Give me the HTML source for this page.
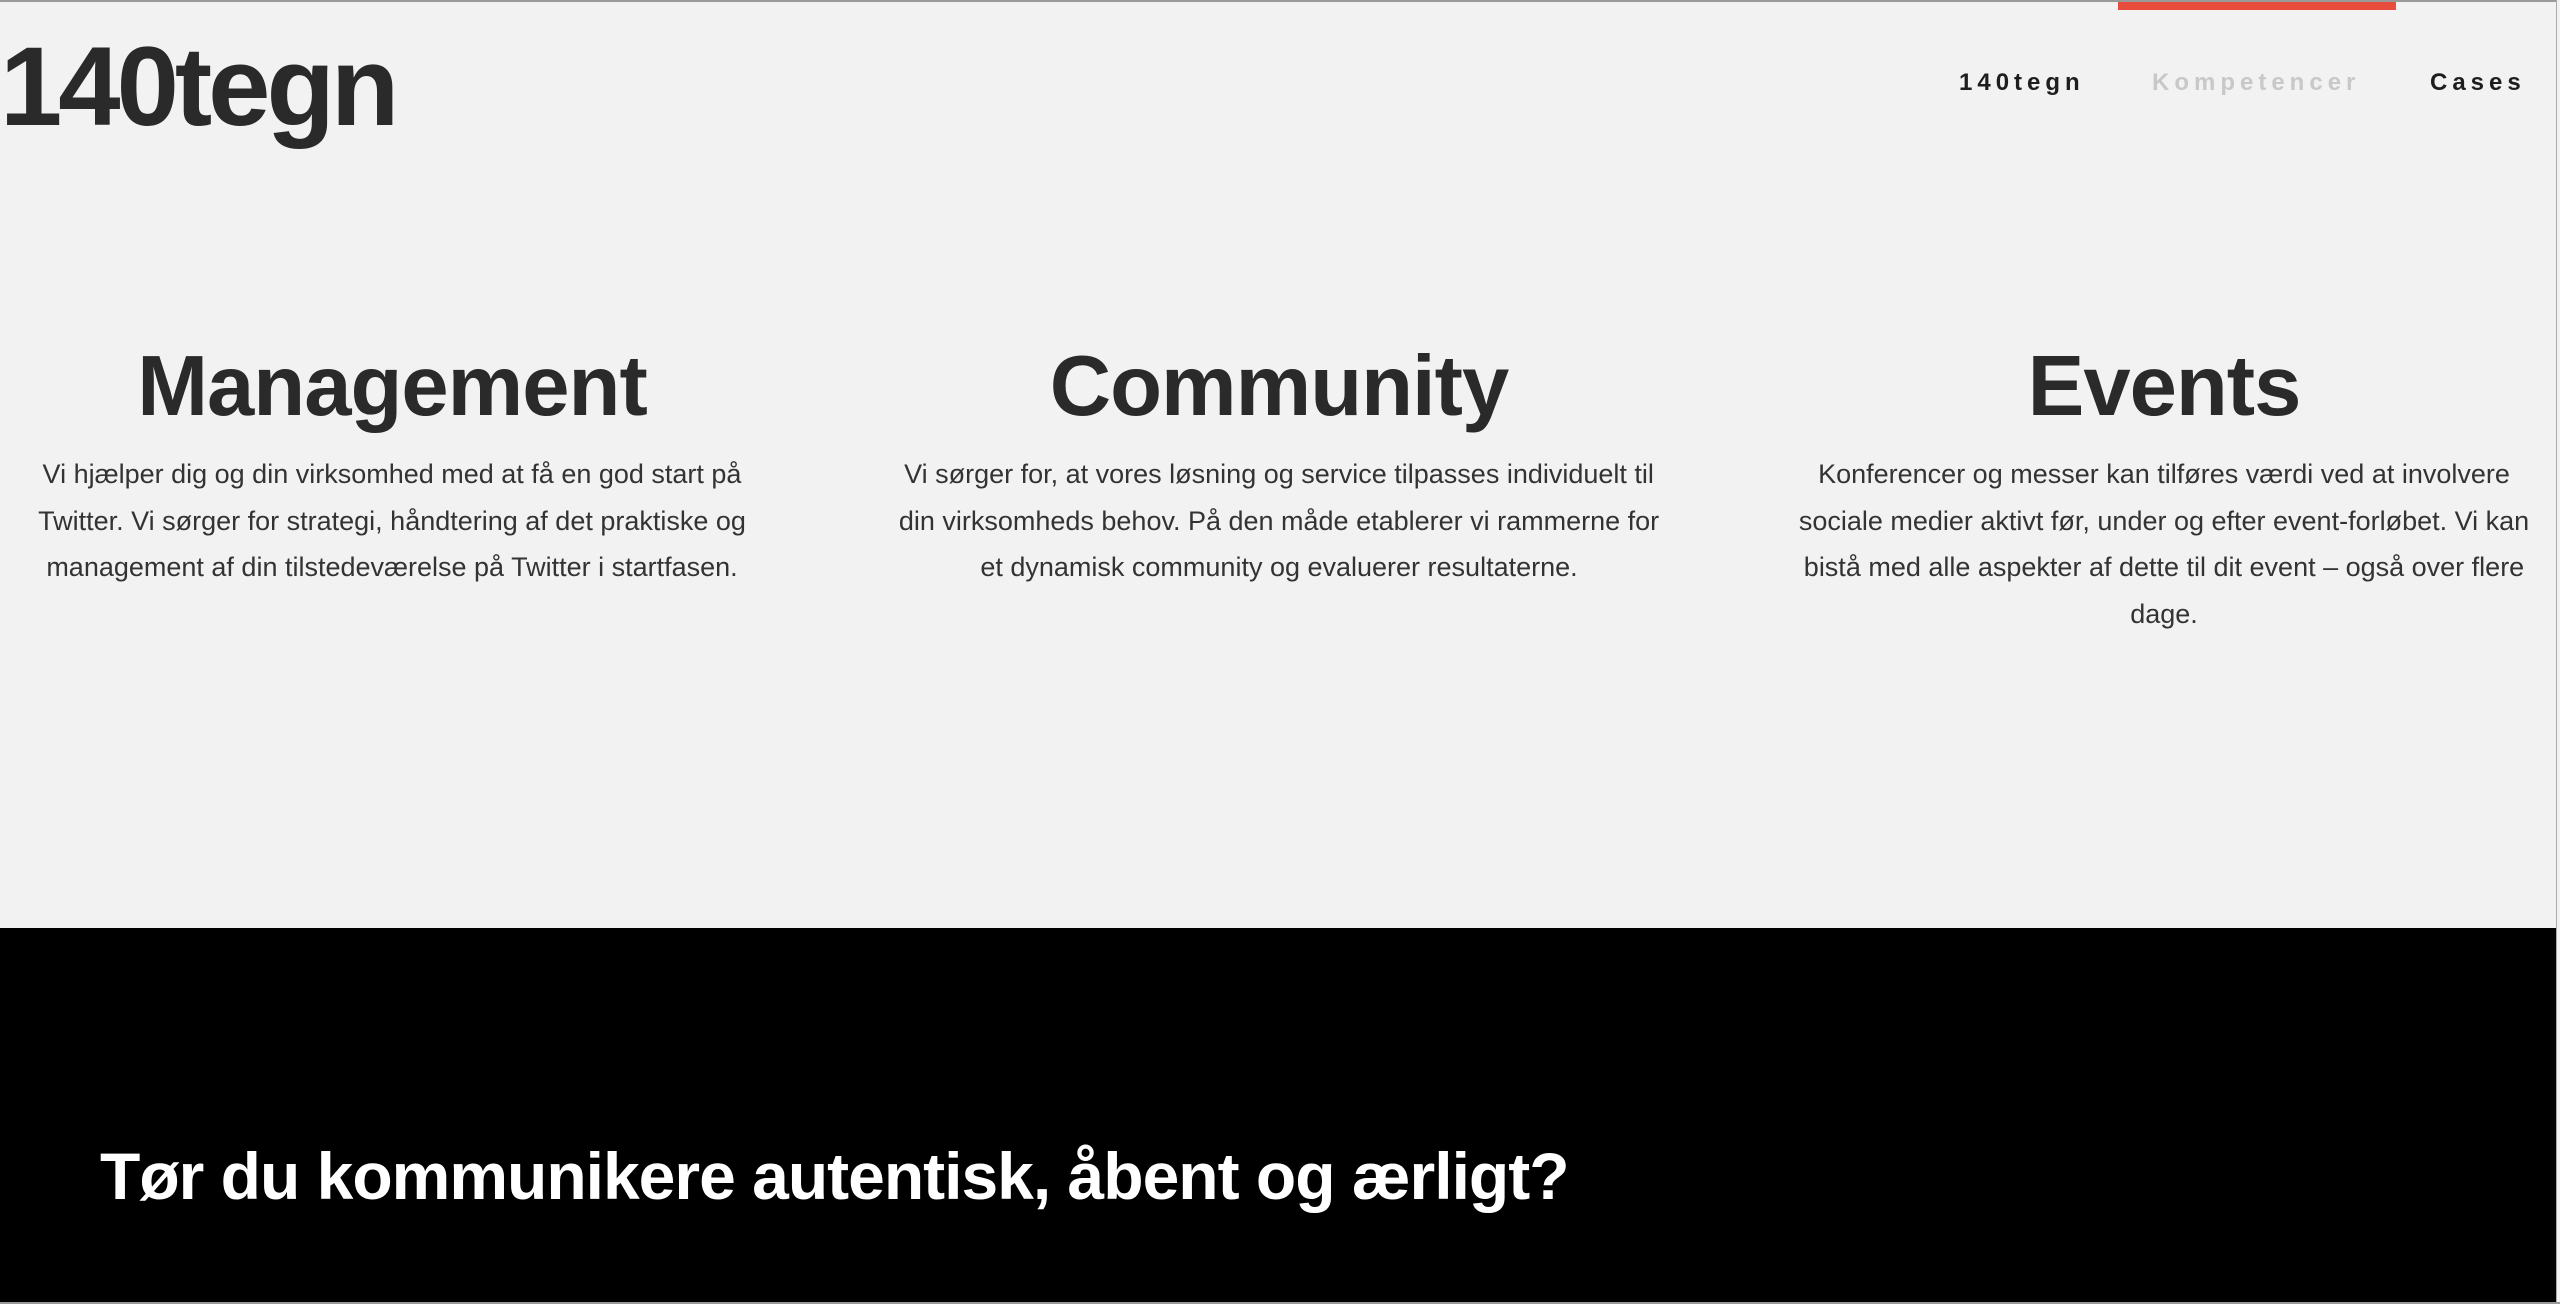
<!DOCTYPE html>
<html><head><meta charset="utf-8"><style>
*{margin:0;padding:0;box-sizing:border-box}
html,body{width:2560px;height:1304px;overflow:hidden;background:#f2f2f2;font-family:"Liberation Sans",sans-serif;color:#2a2a2a}
.top{position:absolute;left:0;top:0;width:2560px;height:2px;background:#9a9a9a}
.red{position:absolute;left:2118px;top:2px;width:278px;height:8px;background:#e74c3c}
.logo{position:absolute;left:0;top:22px;font-size:112px;font-weight:bold;letter-spacing:-4px;line-height:130px;color:#2a2a2a}
.nav{position:absolute;top:69px;font-size:24px;font-weight:bold;letter-spacing:5px;color:#1e1e1e}
.col{position:absolute;top:337px;width:740px;text-align:center}
.col h2{font-size:85px;font-weight:bold;letter-spacing:-1px;line-height:100px;color:#2a2a2a}
.col p{font-size:27px;line-height:46.5px;color:#333;margin-top:14px}
.black{position:absolute;left:0;top:928px;width:2556px;height:374px;background:#000}
.black h3{position:absolute;left:100px;top:210px;font-size:66px;font-weight:bold;color:#fff;letter-spacing:-1px;white-space:nowrap}
.right{position:absolute;left:2556px;top:0;width:4px;height:1304px;background:#f2f2f2;border-left:1px solid #aaa}
.bottom{position:absolute;left:0;top:1302px;width:2560px;height:2px;background:#999}
</style></head><body>
<div class="top"></div><div class="red"></div>
<div class="logo">140tegn</div>
<div class="nav" style="left:1959px">140tegn</div>
<div class="nav" style="left:2152px;color:#c8c8c8">Kompetencer</div>
<div class="nav" style="left:2430px">Cases</div>
<div class="col" style="left:22px"><h2>Management</h2><p>Vi hjælper dig og din virksomhed med at få en god start på Twitter. Vi sørger for strategi, håndtering af det praktiske og management af din tilstedeværelse på Twitter i startfasen.</p></div>
<div class="col" style="left:889px;width:780px"><h2>Community</h2><p>Vi sørger for, at vores løsning og service tilpasses individuelt til din virksomheds behov. På den måde etablerer vi rammerne for et dynamisk community og evaluerer resultaterne.</p></div>
<div class="col" style="left:1794px"><h2>Events</h2><p>Konferencer og messer kan tilføres værdi ved at involvere sociale medier aktivt før, under og efter event-forløbet. Vi kan bistå med alle aspekter af dette til dit event – også over flere dage.</p></div>
<div class="black"><h3>Tør du kommunikere autentisk, åbent og ærligt?</h3></div>
<div class="right"></div>
<div class="bottom"></div>
</body></html>
